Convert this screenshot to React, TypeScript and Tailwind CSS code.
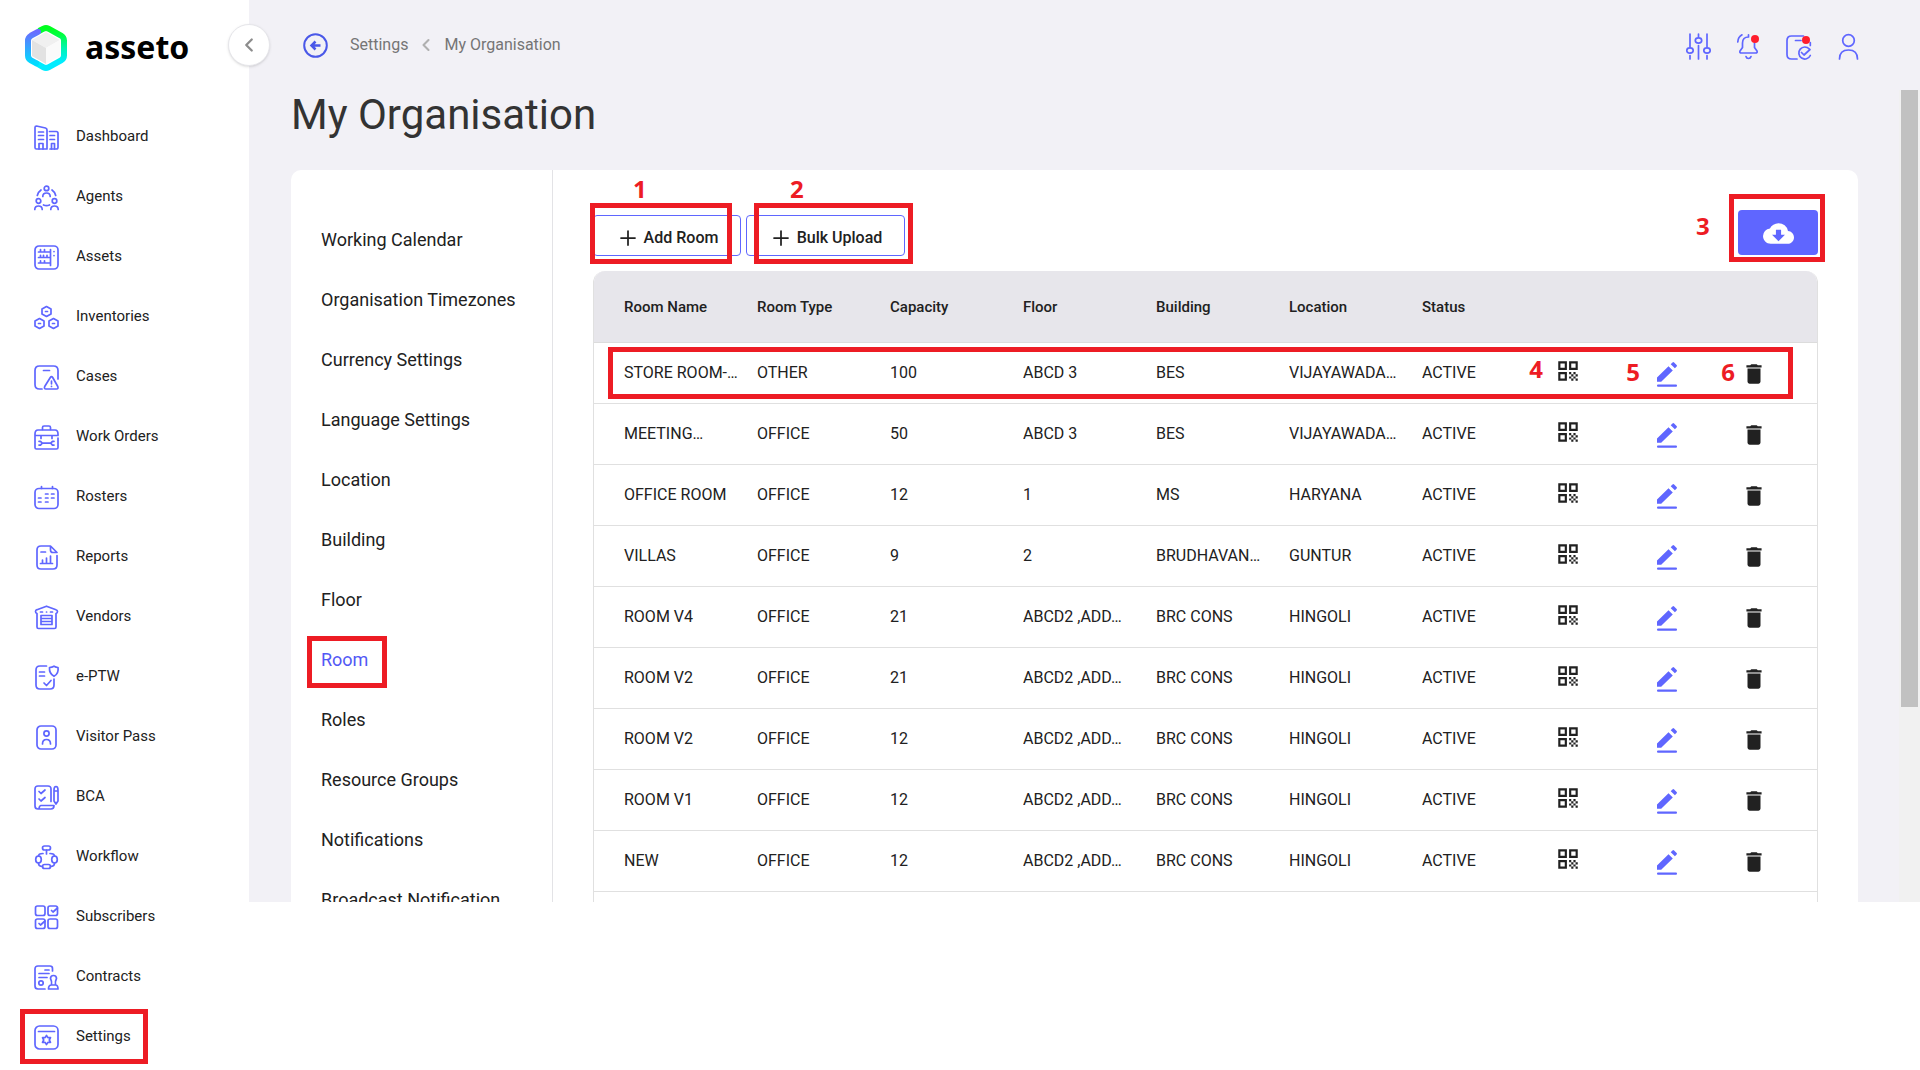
import type { ReactNode } from 'react';
import { ChevronLeft, Plus } from 'lucide-react';
import { MdCloudDownload, MdDelete, MdQrCode } from 'react-icons/md';

interface NavItem {
  label: string;
  icon: ReactNode;
  marked?: boolean;
}

interface Room {
  id: string;
  name: string;
  type: string;
  capacity: number;
  floor: string;
  building: string;
  location: string;
}

const Icon = ({ children }: { children: ReactNode }) => (
  <svg
    viewBox="0 0 25 25"
    className="h-[25px] w-[25px] shrink-0 overflow-visible"
    fill="none"
    stroke="#5f66ff"
    strokeWidth="1.7"
    strokeLinecap="round"
    strokeLinejoin="round"
    aria-hidden="true"
  >
    {children}
  </svg>
);

const navItems: NavItem[] = [
  {
    label: 'Dashboard',
    icon: (
      <Icon>
        <path d="M1 22.500V2.500Q1 1 2.500 1L11.500 3Q13 3.400 13 5v19H2.500Q1 24 1 22.500Z" />
        <path d="M15.500 6.500h6.800q1.700 0 1.700 1.700v14.100q0 1.700-1.700 1.700h-6.300" />
        <path d="M5 24v-5.500h4V24M17.500 24v-5.500h3V24M4.500 7h5M4.500 10.500h5M4.500 14.500h5M16 10.500h4.500M16 14.500h4.500" />
      </Icon>
    ),
  },
  {
    label: 'Agents',
    icon: (
      <Icon>
        <circle cx="12.500" cy="3.400" r="2.300" />
        <circle cx="4.500" cy="16" r="2.300" />
        <circle cx="20.500" cy="16" r="2.300" />
        <path d="M8.800 11.500q0-3.500 3.700-3.500t3.700 3.500M.8 24.500q0-3.500 3.700-3.500t3.700 3.500M16.800 24.500q0-3.500 3.700-3.500t3.700 3.500" />
        <path d="M3.300 10.500q.8-3.500 3.700-5.500M21.700 10.500q-.8-3.500-3.700-5.500M9.500 20q3 1.200 6 0" />
      </Icon>
    ),
  },
  {
    label: 'Assets',
    icon: (
      <Icon>
        <rect x="1" y="1" width="23" height="23" rx="4" />
        <path d="M4.500 7h11.500M4.500 12.500h11.500M4.500 18h11.500M16.500 4.500v16M6.500 4.500v2M10.500 4.500v2M6.500 10.300v2M9.500 10.300v2M13 10.300v2M6.500 15.800v2M10.500 15.800v2" />
        <path d="M20 6.500v.1M20 10.500v.1" />
      </Icon>
    ),
  },
  {
    label: 'Inventories',
    icon: (
      <Icon>
        <path d="M12.500 1.500l4.500 2.500v5l-4.500 2.500L8 9V4ZM5.500 13.500l4.500 2.500v5l-4.500 2.500L1 21v-5ZM19.500 13.500L24 16v5l-4.500 2.500L15 21v-5Z" />
        <path d="M11.500 6.500h2M4.500 18.500h2M18.500 18.500h2" />
      </Icon>
    ),
  },
  {
    label: 'Cases',
    icon: (
      <Icon>
        <path d="M8 24H5.500Q1 24 1 19.500v-14Q1 1 5.500 1h14Q24 1 24 5.500V14" />
        <path d="M9.500 5.500h6" />
        <path d="M16.300 12.500q1.200-1.800 2.400 0l5.100 9q.8 2.500-1.300 2.500H12q-2.200 0-1.300-2.500ZM17.500 16v2.800M17.500 21.300v.1" />
      </Icon>
    ),
  },
  {
    label: 'Work Orders',
    icon: (
      <Icon>
        <path d="M8.500 4.500v-2q0-1.500 1.500-1.500h5q1.500 0 1.500 1.500v2" />
        <path d="M24 13v9.500q0 1.500-1.500 1.500h-20Q1 24 1 22.500V9q0-4 3-4h17q3 0 3 4v1.500H1M7 11v2.500M18 11v2.500" />
        <path d="M5 16.300h1.500l1.800 1.900-1.800 1.900H5M8.300 18.200h8.400M20 16.300h-1.500l-1.800 1.900 1.800 1.900H20" />
      </Icon>
    ),
  },
  {
    label: 'Rosters',
    icon: (
      <Icon>
        <rect x="1" y="3.500" width="23" height="20" rx="4" />
        <path d="M7.500 1.500v2M18.500 1.500v2M11.500 9h2.500M17.500 9H20M4.500 13H7M11.500 13h2.500M17.500 13H20M4.500 17H7M11.500 17h2.500" />
      </Icon>
    ),
  },
  {
    label: 'Reports',
    icon: (
      <Icon>
        <path d="M23 10.500V20q0 4-4 4H7q-4 0-4-4V5q0-4 4-4h9.500L23 7.500h-4Q16.500 7.500 16.500 5V1" />
        <path d="M6.500 18.500h12M8.500 18v-3M12.500 18v-5M16.500 18v-7M7 7h4.500" />
      </Icon>
    ),
  },
  {
    label: 'Vendors',
    icon: (
      <Icon>
        <path d="M3 8.500Q1.500 8 1.500 6.500T3 4.700L12.500 1.200 22 4.700q1.500.4 1.500 1.900T22 8.500V22q0 1.500-1.500 1.500h-16Q3 23.500 3 22Z" />
        <path d="M7 19.500v-9h11v9M7 13.500h11M7 16.500h11M7 19.500h11M6.500 7h2M12.500 7h.1M16.500 7h2" />
      </Icon>
    ),
  },
  {
    label: 'e-PTW',
    icon: (
      <Icon>
        <path d="M12.500 1H6Q2 1 2 5v15q0 4 4 4h10q4 0 4-4v-6" />
        <path d="M20 1.200q2 1.300 4 1.300 1 6-4 8.800-5-2.800-4.500-8.800 2.500 0 4.500-1.300ZM5.500 7h5M5.500 11h5M10 18l2.500 2.500 4.500-5" />
      </Icon>
    ),
  },
  {
    label: 'Visitor Pass',
    icon: (
      <Icon>
        <rect x="3" y="1" width="19" height="23" rx="4" />
        <circle cx="12.500" cy="8.500" r="2.600" />
        <path d="M8.500 19q0-4.500 4-4.500t4 4.500" />
      </Icon>
    ),
  },
  {
    label: 'BCA',
    icon: (
      <Icon>
        <path d="M17 16.500V4q0-3-3-3H4Q1 1 1 4v17q0 3 3 3h13q3 0 3-3.500H7q-1.500 0-2 3" />
        <path d="M5 6.500l2 2L11 5M5 14l2 2 4-3.500M20 5q0-3.500 2-3.500T24 5v11l-2 3-2-3ZM20 6h4" />
      </Icon>
    ),
  },
  {
    label: 'Workflow',
    icon: (
      <Icon>
        <rect x="8.500" y="1" width="8" height="4" rx="2" />
        <ellipse cx="4.500" cy="14.500" rx="2.800" ry="3.500" />
        <ellipse cx="20.500" cy="14.500" rx="2.800" ry="3.500" />
        <rect x="8.500" y="19.500" width="8" height="4" rx="2" />
        <path d="M12.500 5v4M9 8.500q-4.500 0-4.500 2.500M16 8.500q4.500 0 4.500 2.500M4.500 18q0 3.500 4 3.500M20.500 18q0 3.500-4 3.500" />
      </Icon>
    ),
  },
  {
    label: 'Subscribers',
    icon: (
      <Icon>
        <rect x="1.500" y="1" width="9.500" height="9.500" rx="2" />
        <rect x="14" y="1" width="9.500" height="9.500" rx="2" />
        <rect x="1.500" y="14" width="9.500" height="9.500" rx="2" />
        <rect x="14" y="14" width="9.500" height="9.500" rx="2" />
        <path d="M17.500 5.500L19 7l4.500-4M5 18.500L6.500 20l4.500-4" />
      </Icon>
    ),
  },
  {
    label: 'Contracts',
    icon: (
      <Icon>
        <path d="M18.500 6V3.500Q18.500 1 16 1H4Q1 1 1 4v17q0 3 3 3h7" />
        <circle cx="7" cy="18" r="2.200" />
        <path d="M11 5h4M5 8.500h10M5 12.500h8M17.500 20q.5-4-1-6.500 0-3 3-3t3 3q-1.500 2.500-1 6.500ZM17.500 20q-3 0-3 4H24q0-4-2.500-4Z" />
      </Icon>
    ),
  },
  {
    label: 'Settings',
    marked: true,
    icon: (
      <Icon>
        <rect x="1" y="1" width="23" height="23" rx="4.500" />
        <path d="M4.500 6.500h16M12.500 10.500l1.400 2.100 2.600.1-1.200 2.300 1.200 2.300-2.600.1-1.400 2.100-1.400-2.100-2.600-.1L9.700 15l-1.200-2.300 2.600-.1Z" />
      </Icon>
    ),
  },
];

const menuItems = [
  'Working Calendar',
  'Organisation Timezones',
  'Currency Settings',
  'Language Settings',
  'Location',
  'Building',
  'Floor',
  'Room',
  'Roles',
  'Resource Groups',
  'Notifications',
  'Broadcast Notification',
];

const columns = ['Room Name', 'Room Type', 'Capacity', 'Floor', 'Building', 'Location', 'Status'];

const rooms: Room[] = [
  { id: '1', name: 'STORE ROOM-…', type: 'OTHER', capacity: 100, floor: 'ABCD 3', building: 'BES', location: 'VIJAYAWADA…' },
  { id: '2', name: 'MEETING…', type: 'OFFICE', capacity: 50, floor: 'ABCD 3', building: 'BES', location: 'VIJAYAWADA…' },
  { id: '3', name: 'OFFICE ROOM', type: 'OFFICE', capacity: 12, floor: '1', building: 'MS', location: 'HARYANA' },
  { id: '4', name: 'VILLAS', type: 'OFFICE', capacity: 9, floor: '2', building: 'BRUDHAVAN…', location: 'GUNTUR' },
  { id: '5', name: 'ROOM V4', type: 'OFFICE', capacity: 21, floor: 'ABCD2 ,ADD…', building: 'BRC CONS', location: 'HINGOLI' },
  { id: '6', name: 'ROOM V2', type: 'OFFICE', capacity: 21, floor: 'ABCD2 ,ADD…', building: 'BRC CONS', location: 'HINGOLI' },
  { id: '7', name: 'ROOM V2', type: 'OFFICE', capacity: 12, floor: 'ABCD2 ,ADD…', building: 'BRC CONS', location: 'HINGOLI' },
  { id: '8', name: 'ROOM V1', type: 'OFFICE', capacity: 12, floor: 'ABCD2 ,ADD…', building: 'BRC CONS', location: 'HINGOLI' },
  { id: '9', name: 'NEW', type: 'OFFICE', capacity: 12, floor: 'ABCD2 ,ADD…', building: 'BRC CONS', location: 'HINGOLI' },
];

// Red frame drawn over the element it points at
const Frame = ({ className }: { className: string }) => (
  <span className={`pointer-events-none absolute z-10 border-[5px] border-[#ed1c24] ${className}`} />
);

const Step = ({ n, className }: { n: number; className: string }) => (
  <span
    className={`pointer-events-none absolute z-10 font-['Open_Sans',sans-serif] text-2xl leading-6 font-bold text-[#ed1c24] ${className}`}
  >
    {n}
  </span>
);

const Pencil = () => (
  <svg viewBox="0 0 20 25" className="h-[25px] w-5" fill="#5f66ff" aria-hidden="true">
    <path d="M0 15.600L11.500 4.200l4.300 4.200L4.200 19.700H0ZM13.700 2.300L15.500.5q.8-.8 1.600 0l2.500 2.500q.8.8 0 1.600l-1.700 1.700Z" />
    <rect y="22.400" width="20" height="2.400" rx="1" />
  </svg>
);

const Logo = () => (
  <div className="flex h-[94px] items-center gap-[18px] pt-[2px] pl-[25px]">
    <svg viewBox="0 0 42 46" className="h-[46px] w-[42px]" aria-hidden="true">
      <defs>
        <linearGradient id="ring" x1="0" y1="0" x2="0" y2="1">
          <stop offset="0" stopColor="#00ff1e" />
          <stop offset="0.15" stopColor="#00ff3c" />
          <stop offset="0.5" stopColor="#00f5b0" />
          <stop offset="0.85" stopColor="#00ecff" />
        </linearGradient>
        <linearGradient id="ringLeft" x1="0" y1="0" x2="0" y2="1">
          <stop offset="0" stopColor="#6a6cff" />
          <stop offset="1" stopColor="#00dcff" />
        </linearGradient>
      </defs>
      <path
        d="M14 6l4.500-2.300q2.500-1.200 5 0L36 10.500q3 1.800 3 5v15q0 3.200-3 5l-12.500 6.800q-2.500 1.200-5 0L11 38"
        fill="none"
        stroke="url(#ring)"
        strokeWidth="6"
      />
      <path
        d="M13 6.800L6 10.700q-3 1.800-3 5v14.800q0 3.200 3 5l5 2.700"
        fill="none"
        stroke="url(#ringLeft)"
        strokeWidth="6"
        strokeLinecap="round"
      />
      <path d="M21 7l14 8-14 8-14-8Z" fill="#f0f0f0" />
      <path d="M7 15l14 8v16L7 31Z" fill="#e2e2e2" />
      <path d="M35 15l-14 8v16l14-8Z" fill="#fafafa" />
    </svg>
    <span className="pb-[3px] font-['Noto_Sans',sans-serif] text-[32px] leading-8 font-bold text-black">asseto</span>
  </div>
);

const Sidebar = () => (
  <aside className="w-[249px] shrink-0 bg-white">
    <Logo />
    <nav className="mt-3">
      {navItems.map((item) => (
        <a key={item.label} href="#" className="relative flex h-[60px] items-center gap-[17px] pl-[34px] text-[15px] text-[#212121]">
          <span className="mt-[3px]">{item.icon}</span>
          <span>{item.label}</span>
          {item.marked && <Frame className="top-[3px] left-5 h-[55px] w-32" />}
        </a>
      ))}
    </nav>
  </aside>
);

const TopBar = () => (
  <header className="relative flex h-[90px] shrink-0 items-start justify-between pr-[59px] pl-[54px]">
    <button
      type="button"
      aria-label="Collapse sidebar"
      className="absolute top-6 -left-[21px] flex h-[42px] w-[42px] items-center justify-center rounded-full border border-[#e6e6ea] bg-white shadow-sm"
    >
      <ChevronLeft className="h-[22px] w-[22px] text-[#8c8c8c]" strokeWidth={2.5} />
    </button>
    <div className="flex h-[90px] items-center text-base text-[#757575]">
      <button type="button" aria-label="Back" className="mr-[22px]">
        <svg viewBox="0 0 25 25" className="h-[25px] w-[25px]" fill="none" stroke="#4a58e8" strokeWidth="2" aria-hidden="true">
          <circle cx="12.500" cy="12.500" r="11.300" />
          <path d="M17.500 12.500H9M12.500 8.500l-4 4 4 4" strokeWidth="2.500" />
        </svg>
      </button>
      <a href="#">Settings</a>
      <ChevronLeft className="mx-2 h-5 w-5 text-[#b0b0b0]" strokeWidth={2.5} />
      <a href="#">My Organisation</a>
    </div>
    <div className="flex items-center gap-[25px] pt-[34px]">
      <button type="button" aria-label="Filters">
        <Icon>
          <path d="M4 0v13M4 21.500V25M12.500 0v3M12.500 11.500V25M21 0v13M21 21.500V25" />
          <ellipse cx="4" cy="16.500" rx="3.200" ry="2.600" />
          <ellipse cx="12.500" cy="6.500" rx="3.200" ry="2.600" />
          <ellipse cx="21" cy="16.500" rx="3.200" ry="2.600" />
        </Icon>
      </button>
      <button type="button" aria-label="Alerts">
        <Icon>
          <path d="M12.500 3Q6.500 3 6.500 9v4.500L4 17q-.8 2 1.500 2h14q2.300 0 1.500-2l-2.500-3.500V9M12.500 3V.8M10 22.500q.5 2 2.500 2t2.500-2M1.800 8Q2 3 6 .8" />
          <circle cx="19" cy="5" r="4" fill="#ff1e2d" stroke="none" />
        </Icon>
      </button>
      <button type="button" aria-label="Tasks">
        <Icon>
          <path d="M11 25H5.500Q1 25 1 20.500V6.500Q1 2 5.500 2h12M24.300 8.500v3M9.500 6.500H15" />
          <path d="M24.300 21.500a6 6 0 1 1-1-6.500M15.500 18.500L18 21l6-5.500" />
          <circle cx="20" cy="6" r="4" fill="#ff1e2d" stroke="none" />
        </Icon>
      </button>
      <button type="button" aria-label="Profile">
        <Icon>
          <circle cx="12.500" cy="6.500" r="5.800" />
          <path d="M3.500 25q0-9 9-9t9 9" />
        </Icon>
      </button>
    </div>
  </header>
);

const SettingsMenu = () => (
  <nav className="w-[262px] shrink-0 border-r border-[#e3e3e6] pt-10 pl-[30px]">
    {menuItems.map((item) => (
      <a
        key={item}
        href="#"
        className={`relative flex h-[60px] items-center text-lg ${item === 'Room' ? 'text-[#5258f5]' : 'text-[#212121]'}`}
      >
        {item}
        {item === 'Room' && <Frame className="top-[6px] -left-[14px] h-[52px] w-20" />}
      </a>
    ))}
  </nav>
);

const RoomTable = () => (
  <div className="relative mt-[15px] overflow-hidden rounded-t-xl border-x border-[#e0e0e0]">
    <table className="w-full table-fixed text-left text-base text-[#212121]">
      <colgroup>
        <col className="w-[163px]" />
        <col span={6} />
        <col className="w-[102px]" />
        <col className="w-[84px]" />
        <col className="w-[76px]" />
      </colgroup>
      <thead className="bg-[#e7e6eb] text-[15px]">
        <tr className="h-[71px] border-b border-[#dcdcdc]">
          {columns.map((column) => (
            <th key={column} className="pt-[2px] font-medium first:pl-[30px]">
              {column}
            </th>
          ))}
          <th colSpan={3} />
        </tr>
      </thead>
      <tbody>
        {rooms.map((room) => (
          <tr key={room.id} className="h-[61px] border-b border-[#e0e0e0]">
            <td className="truncate pl-[30px]">{room.name}</td>
            <td className="truncate">{room.type}</td>
            <td className="truncate">{room.capacity}</td>
            <td className="truncate">{room.floor}</td>
            <td className="truncate">{room.building}</td>
            <td className="truncate">{room.location}</td>
            <td className="truncate">ACTIVE</td>
            <td>
              <button type="button" aria-label="Show QR code" className="mb-1 block">
                <MdQrCode className="h-[26px] w-[26px]" />
              </button>
            </td>
            <td>
              <button type="button" aria-label="Edit room" className="mt-1 block">
                <Pencil />
              </button>
            </td>
            <td>
              <button type="button" aria-label="Delete room" className="mt-[2px] block">
                <MdDelete className="h-[26px] w-[26px]" />
              </button>
            </td>
          </tr>
        ))}
        <tr className="h-[61px]">
          <td colSpan={10} />
        </tr>
      </tbody>
    </table>
    <Frame className="top-[76px] right-6 left-[14px] h-[52px]" />
    <Step n={4} className="top-[86px] right-[274px]" />
    <Step n={5} className="top-[89px] right-[177px]" />
    <Step n={6} className="top-[89px] right-[82px]" />
  </div>
);

const RoomPanel = () => (
  <section className="min-w-0 flex-1 px-10">
    <div className="flex items-start justify-between pt-10">
      <div className="flex gap-[5px] pt-[5px]">
        <div className="relative">
          <button
            type="button"
            className="flex h-[41px] w-[148px] items-center justify-center gap-1 rounded border border-[#5f66ff] pt-[5px] text-base font-medium text-[#212121]"
          >
            <Plus className="h-6 w-6" strokeWidth={1.75} />
            Add Room
          </button>
          <Frame className="-top-3 -left-[3px] h-[61px] w-[142px]" />
          <Step n={1} className="-top-[38px] left-10" />
        </div>
        <div className="relative">
          <button
            type="button"
            className="flex h-[41px] w-[159px] items-center justify-center gap-1 rounded border border-[#5f66ff] pt-[5px] text-base font-medium text-[#212121]"
          >
            <Plus className="h-6 w-6" strokeWidth={1.75} />
            Bulk Upload
          </button>
          <Frame className="-top-3 left-2 h-[61px] w-[159px]" />
          <Step n={2} className="-top-[38px] left-11" />
        </div>
      </div>
      <div className="relative">
        <button
          type="button"
          aria-label="Download rooms"
          className="flex h-[45px] w-20 items-center justify-center rounded bg-[#5f66ff] pt-[2px] text-white"
        >
          <MdCloudDownload className="h-[31px] w-[31px]" />
        </button>
        <Frame className="-top-4 -left-[9px] h-[68px] w-24" />
        <Step n={3} className="top-1 -left-[42px]" />
      </div>
    </div>
    <RoomTable />
  </section>
);

export default function App() {
  return (
    <div className="flex h-screen min-h-[1070px] bg-white font-[Roboto,sans-serif]">
      <Sidebar />
      <main className="mb-[168px] flex min-w-0 flex-1 flex-col bg-[#f2f1f6]">
        <TopBar />
        <div className="flex min-h-0 flex-1">
          <div className="flex min-w-0 flex-1 flex-col overflow-hidden pr-[41px] pl-[42px]">
            <h1 className="h-20 text-[42px] leading-[50px] text-[#333]">My Organisation</h1>
            <div className="flex min-h-0 flex-1 overflow-hidden rounded-t-[10px] bg-white">
              <SettingsMenu />
              <RoomPanel />
            </div>
          </div>
          {/* Scrollbar */}
          <div className="w-[21px] bg-[#f1f1f1] px-[2px]">
            <div className="h-[76%] bg-[#c1c1c1]" />
          </div>
        </div>
      </main>
    </div>
  );
}
